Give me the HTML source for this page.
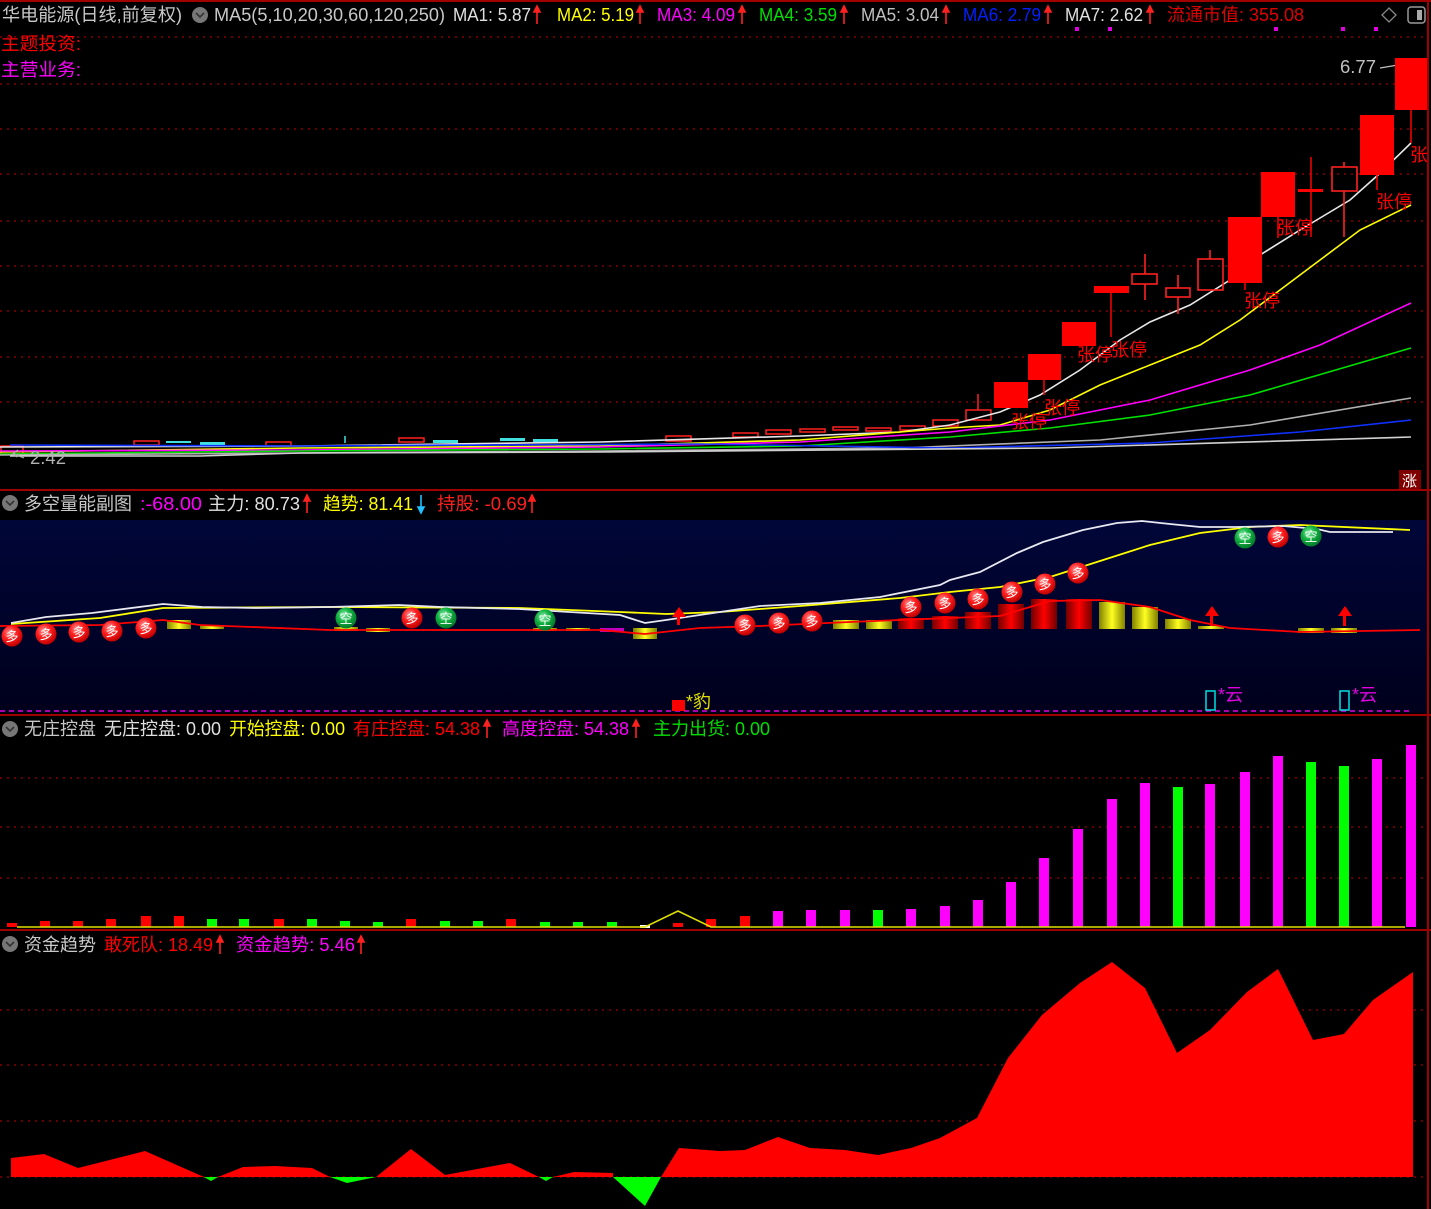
<!DOCTYPE html>
<html><head><meta charset="utf-8"><style>
html,body{margin:0;padding:0;background:#000;}
body{width:1431px;height:1209px;overflow:hidden;}
svg{display:block;}
text{font-family:"Liberation Sans","Noto Sans CJK SC","WenQuanYi Zen Hei",sans-serif;font-size:18px;}
</style></head><body>
<svg width="1431" height="1209" viewBox="0 0 1431 1209" xmlns="http://www.w3.org/2000/svg">
<defs>
<radialGradient id="rb" cx="40%" cy="35%" r="65%"><stop offset="0" stop-color="#ff9a9a"/><stop offset="0.5" stop-color="#ff2020"/><stop offset="1" stop-color="#c00000"/></radialGradient>
<radialGradient id="gb" cx="40%" cy="35%" r="65%"><stop offset="0" stop-color="#8ff0b0"/><stop offset="0.5" stop-color="#10b040"/><stop offset="1" stop-color="#067a2a"/></radialGradient>
<linearGradient id="yb" x1="0" x2="1"><stop offset="0" stop-color="#808000"/><stop offset="0.5" stop-color="#ffff20"/><stop offset="1" stop-color="#808000"/></linearGradient>
<linearGradient id="rbar" x1="0" x2="1"><stop offset="0" stop-color="#700000"/><stop offset="0.5" stop-color="#ff0000"/><stop offset="1" stop-color="#700000"/></linearGradient>
<linearGradient id="navy" x1="0" y1="0" x2="0" y2="1"><stop offset="0" stop-color="#000638"/><stop offset="1" stop-color="#00001c"/></linearGradient>
</defs>

<rect x="0" y="0" width="1431" height="2" fill="#a00000"/>
<rect x="1427" y="0" width="2" height="1209" fill="#a00000"/>
<rect x="0" y="489" width="1431" height="2" fill="#a00000"/>
<rect x="0" y="714" width="1431" height="2" fill="#a00000"/>
<rect x="0" y="929" width="1431" height="2" fill="#a00000"/>

<g stroke="#a00000" stroke-width="1.2" stroke-dasharray="2,5">
<line x1="0" y1="37" x2="1427" y2="37"/><line x1="0" y1="84" x2="1427" y2="84"/>
<line x1="0" y1="129" x2="1427" y2="129"/><line x1="0" y1="174" x2="1427" y2="174"/>
<line x1="0" y1="221" x2="1427" y2="221"/><line x1="0" y1="266" x2="1427" y2="266"/>
<line x1="0" y1="311" x2="1427" y2="311"/><line x1="0" y1="357" x2="1427" y2="357"/>
<line x1="0" y1="402" x2="1427" y2="402"/>
<line x1="0" y1="778" x2="1427" y2="778"/><line x1="0" y1="827" x2="1427" y2="827"/><line x1="0" y1="878" x2="1427" y2="878"/>
<line x1="0" y1="1010" x2="1427" y2="1010"/><line x1="0" y1="1065" x2="1427" y2="1065"/><line x1="0" y1="1121" x2="1427" y2="1121"/><line x1="0" y1="1177" x2="1427" y2="1177"/>
</g>

<!-- header row -->
<text x="2" y="21" fill="#c8c8c8" textLength="180" lengthAdjust="spacingAndGlyphs">华电能源(日线,前复权)</text>
<circle cx="200" cy="15" r="8" fill="#777"/><path d="M196 13 L200 17 L204 13" stroke="#333" stroke-width="1.6" fill="none"/>
<text x="214" y="21" fill="#c8c8c8" textLength="231" lengthAdjust="spacingAndGlyphs">MA5(5,10,20,30,60,120,250)</text>
<text x="453" y="21" fill="#e0e0e0" textLength="78" lengthAdjust="spacingAndGlyphs">MA1: 5.87</text>
<text x="557" y="21" fill="#ffff00" textLength="77" lengthAdjust="spacingAndGlyphs">MA2: 5.19</text>
<text x="657" y="21" fill="#ff00ff" textLength="78" lengthAdjust="spacingAndGlyphs">MA3: 4.09</text>
<text x="759" y="21" fill="#00e000" textLength="78" lengthAdjust="spacingAndGlyphs">MA4: 3.59</text>
<text x="861" y="21" fill="#c0c0c0" textLength="78" lengthAdjust="spacingAndGlyphs">MA5: 3.04</text>
<text x="963" y="21" fill="#0020ff" textLength="78" lengthAdjust="spacingAndGlyphs">MA6: 2.79</text>
<text x="1065" y="21" fill="#e0e0e0" textLength="78" lengthAdjust="spacingAndGlyphs">MA7: 2.62</text>
<g stroke="#ff2020" stroke-width="1.6" fill="#ff2020">
<path d="M537 24 V8 M534 12 L537 6 L540 12 Z"/><path d="M640 24 V8 M637 12 L640 6 L643 12 Z"/><path d="M742 24 V8 M739 12 L742 6 L745 12 Z"/><path d="M844 24 V8 M841 12 L844 6 L847 12 Z"/><path d="M946 24 V8 M943 12 L946 6 L949 12 Z"/><path d="M1048 24 V8 M1045 12 L1048 6 L1051 12 Z"/><path d="M1150 24 V8 M1147 12 L1150 6 L1153 12 Z"/>
</g>
<text x="1167" y="21" fill="#e00000" textLength="137" lengthAdjust="spacingAndGlyphs">流通市值: 355.08</text>
<path d="M1389 8 L1396 15 L1389 22 L1382 15 Z" stroke="#888" stroke-width="1.3" fill="none"/>
<rect x="1408" y="7" width="17" height="16" rx="3" stroke="#999" stroke-width="1.5" fill="none"/><rect x="1417" y="10" width="5" height="10" fill="#aaa"/>
<g fill="#e000e0"><rect x="1075" y="27" width="4" height="4"/><rect x="1108" y="27" width="4" height="4"/><rect x="1274" y="27" width="4" height="4"/><rect x="1341" y="27" width="4" height="4"/><rect x="1374" y="27" width="4" height="4"/></g>
<text x="1" y="50" fill="#ff0000" textLength="80" lengthAdjust="spacingAndGlyphs">主题投资:</text>
<text x="1" y="76" fill="#ff00ff" textLength="80" lengthAdjust="spacingAndGlyphs">主营业务:</text>
<text x="1340" y="73" fill="#c0c0c0" textLength="36" lengthAdjust="spacingAndGlyphs">6.77</text>
<path d="M1380 68 L1404 64 M1399 60 L1405 64 L1399 66" stroke="#c0c0c0" stroke-width="1.3" fill="none"/>

<!-- left flat candles -->
<g stroke="#ff2020" stroke-width="1.5" fill="none">
<rect x="1" y="446" width="22" height="8"/><rect x="134" y="441" width="25" height="4"/><rect x="266" y="442" width="25" height="4"/><rect x="399" y="438" width="25" height="4"/>
<rect x="666" y="436" width="25" height="5"/><rect x="733" y="433" width="25" height="4"/><rect x="766" y="430" width="25" height="4"/><rect x="800" y="429" width="25" height="3"/><rect x="833" y="427" width="25" height="3"/><rect x="866" y="428" width="25" height="3"/><rect x="900" y="426" width="25" height="4"/><rect x="933" y="420" width="25" height="6"/><rect x="966" y="410" width="25" height="10"/>
</g>
<g fill="#40e0e0"><rect x="166" y="441" width="25" height="2"/><rect x="200" y="442" width="25" height="3"/><rect x="433" y="440" width="25" height="3"/><rect x="500" y="438" width="25" height="3"/><rect x="533" y="439" width="25" height="3"/></g>
<line x1="345" y1="436" x2="345" y2="443" stroke="#40e0e0" stroke-width="1.5"/>
<line x1="978" y1="394" x2="978" y2="410" stroke="#ff2020" stroke-width="1.5"/>

<g fill="none" stroke-width="1.6">
<polyline stroke="#e8e8e8" points="0,447 300,446 600,442 800,436 900,432 950,425 1000,412 1040,395 1080,370 1120,340 1150,322 1190,305 1230,280 1260,255 1300,230 1350,200 1378,175 1411,143"/>
<polyline stroke="#ffff00" points="0,452 300,448 600,446 800,440 950,428 1000,425 1050,410 1100,385 1150,365 1200,345 1240,320 1280,290 1320,260 1360,230 1411,205"/>
<polyline stroke="#ff00ff" points="0,451 300,450 600,447 800,442 950,432 1050,420 1150,400 1250,370 1320,345 1411,303"/>
<polyline stroke="#00e000" points="0,454 300,451 600,449 800,446 950,437 1050,428 1150,415 1250,395 1411,348"/>
<polyline stroke="#b0b0b0" points="0,455 300,453 600,451 900,448 1100,440 1250,425 1411,398"/>
<polyline stroke="#1030ff" points="10,445 300,446 700,444 950,448 1150,443 1300,432 1411,420"/>
<polyline stroke="#d0d0d0" points="10,456 200,456 300,453 600,452 1050,448 1411,437"/>
</g>

<g fill="#ff0000" stroke="#ff0000" stroke-width="1.5">
<rect x="994" y="382" width="34" height="26" stroke="none"/>
<rect x="1028" y="354" width="33" height="26" stroke="none"/><line x1="1044" y1="380" x2="1044" y2="395"/>
<rect x="1062" y="322" width="34" height="24" stroke="none"/>
<rect x="1094" y="286" width="35" height="7" stroke="none"/><line x1="1111" y1="293" x2="1111" y2="337"/>
<rect x="1228" y="217" width="34" height="66" stroke="none"/><line x1="1245" y1="283" x2="1245" y2="290"/>
<rect x="1261" y="172" width="34" height="45" stroke="none"/><line x1="1278" y1="217" x2="1278" y2="238"/>
<rect x="1298" y="189" width="25" height="3" stroke="none"/><line x1="1311" y1="157" x2="1311" y2="237"/>
<rect x="1360" y="115" width="34" height="60" stroke="none"/><line x1="1377" y1="175" x2="1377" y2="190"/>
<rect x="1395" y="58" width="32" height="52" stroke="none"/><line x1="1411" y1="110" x2="1411" y2="143"/>
</g>
<g fill="none" stroke="#ff2020" stroke-width="1.6">
<rect x="1132" y="274" width="25" height="10"/><line x1="1145" y1="254" x2="1145" y2="274"/><line x1="1145" y1="284" x2="1145" y2="300"/>
<rect x="1166" y="288" width="24" height="9"/><line x1="1178" y1="275" x2="1178" y2="288"/><line x1="1178" y1="297" x2="1178" y2="314"/>
<rect x="1198" y="259" width="25" height="31"/><line x1="1210" y1="250" x2="1210" y2="259"/>
<rect x="1332" y="167" width="25" height="24"/><line x1="1344" y1="162" x2="1344" y2="167"/><line x1="1344" y1="191" x2="1344" y2="237"/>
</g>
<g fill="#ff0000">
<text x="1011" y="428">张停</text><text x="1044" y="414">张停</text><text x="1077" y="361">张停</text><text x="1111" y="356">张停</text>
<text x="1244" y="307">张停</text><text x="1277" y="234">张停</text><text x="1376" y="208">张停</text><text x="1410" y="161">张</text>
</g>
<text x="30" y="464" fill="#b0b0b0" textLength="36" lengthAdjust="spacingAndGlyphs">2.42</text>
<path d="M24 458 L14 454 M18 450 L13 454 L17 457" stroke="#b0b0b0" stroke-width="1.2" fill="none"/>
<rect x="1399" y="470" width="22" height="19" fill="#800000"/><text x="1402" y="486" fill="#fff" style="font-size:15px">涨</text>

<!-- panel 2 -->
<circle cx="10" cy="503" r="8" fill="#777"/><path d="M6 501 L10 505 L14 501" stroke="#333" stroke-width="1.6" fill="none"/>
<text x="24" y="510" fill="#c8c8c8" textLength="108" lengthAdjust="spacingAndGlyphs">多空量能副图</text>
<text x="140" y="510" fill="#ff00ff" textLength="62" lengthAdjust="spacingAndGlyphs">:-68.00</text>
<text x="208" y="510" fill="#e0e0e0" textLength="92" lengthAdjust="spacingAndGlyphs">主力: 80.73</text>
<text x="323" y="510" fill="#ffff00" textLength="90" lengthAdjust="spacingAndGlyphs">趋势: 81.41</text>
<text x="437" y="510" fill="#ff2020" textLength="90" lengthAdjust="spacingAndGlyphs">持股: -0.69</text>
<g stroke-width="1.6">
<path d="M307 513 V497 M304 501 L307 495 L310 501 Z" stroke="#ff2020" fill="#ff2020"/>
<path d="M421 495 V511 M418 507 L421 513 L424 507 Z" stroke="#20c0ff" fill="#20c0ff"/>
<path d="M532 513 V497 M529 501 L532 495 L535 501 Z" stroke="#ff2020" fill="#ff2020"/>
</g>
<rect x="0" y="520" width="1427" height="193" fill="url(#navy)"/>
<line x1="0" y1="711" x2="1412" y2="711" stroke="#e000e0" stroke-width="1.5" stroke-dasharray="5,4"/>
<g>
<rect x="167" y="620" width="24" height="9" fill="url(#yb)"/><rect x="200" y="625" width="24" height="4" fill="url(#yb)"/>
<rect x="334" y="627" width="24" height="4" fill="url(#yb)"/><rect x="366" y="628" width="24" height="4" fill="url(#yb)"/>
<rect x="533" y="628" width="24" height="3" fill="url(#yb)"/><rect x="566" y="628" width="24" height="3" fill="url(#yb)"/>
<rect x="600" y="628" width="24" height="4" fill="#c000c0"/>
<rect x="633" y="628" width="24" height="11" fill="url(#yb)"/>
<rect x="833" y="620" width="26" height="9" fill="url(#yb)"/><rect x="866" y="620" width="26" height="9" fill="url(#yb)"/>
<rect x="898" y="618" width="26" height="11" fill="url(#rbar)"/><rect x="932" y="616" width="26" height="13" fill="url(#rbar)"/>
<rect x="965" y="612" width="26" height="17" fill="url(#rbar)"/><rect x="998" y="604" width="26" height="25" fill="url(#rbar)"/>
<rect x="1031" y="599" width="26" height="30" fill="url(#rbar)"/><rect x="1066" y="599" width="26" height="30" fill="url(#rbar)"/>
<rect x="1099" y="602" width="26" height="27" fill="url(#yb)"/><rect x="1132" y="607" width="26" height="22" fill="url(#yb)"/>
<rect x="1165" y="619" width="26" height="10" fill="url(#yb)"/><rect x="1198" y="626" width="26" height="3" fill="url(#yb)"/>
<rect x="1298" y="628" width="26" height="5" fill="url(#yb)"/><rect x="1331" y="628" width="26" height="5" fill="url(#yb)"/>
</g>
<g fill="none" stroke-width="1.8">
<polyline stroke="#ff0000" points="0,626 100,625 163,620 200,625 330,630 500,630 600,630 645,634 700,628 760,626 850,622 950,618 1000,616 1050,601 1100,600 1150,607 1190,620 1230,628 1300,632 1420,630"/>
<polyline stroke="#ffff00" points="11,624 100,618 163,608 330,607 520,608 620,612 666,614 720,612 800,606 900,598 950,592 1000,587 1050,577 1100,561 1150,545 1200,533 1250,527 1300,525 1410,530"/>
<polyline stroke="#e8e8f0" points="11,623 46,617 92,613 163,604 202,607 257,608 330,607 399,605 441,607 519,609 620,615 645,623 666,620 720,612 760,606 820,603 880,597 940,585 950,580 980,572 1017,553 1043,542 1083,530 1117,523 1142,521 1170,524 1200,527 1237,527 1283,526 1317,529 1330,532 1393,532"/>
</g>
<g fill="#ff0000"><path d="M672 617 L679 607 L686 617 Z"/><rect x="677" y="616" width="3" height="9"/>
<path d="M1205 616 L1212 606 L1219 616 Z"/><rect x="1210" y="615" width="3" height="11"/>
<path d="M1338 616 L1345 606 L1352 616 Z"/><rect x="1343" y="615" width="3" height="11"/></g>
<g text-anchor="middle">
<g fill="url(#rb)"><circle cx="12" cy="636" r="10.5"/><circle cx="46" cy="634" r="10.5"/><circle cx="79" cy="632" r="10.5"/><circle cx="112" cy="631" r="10.5"/><circle cx="146" cy="628" r="10.5"/><circle cx="412" cy="618" r="10.5"/><circle cx="745" cy="625" r="10.5"/><circle cx="779" cy="623" r="10.5"/><circle cx="812" cy="621" r="10.5"/><circle cx="911" cy="607" r="10.5"/><circle cx="945" cy="603" r="10.5"/><circle cx="978" cy="599" r="10.5"/><circle cx="1012" cy="592" r="10.5"/><circle cx="1045" cy="584" r="10.5"/><circle cx="1078" cy="573" r="10.5"/><circle cx="1278" cy="537" r="10.5"/></g>
<g fill="url(#gb)"><circle cx="346" cy="618" r="10.5"/><circle cx="446" cy="618" r="10.5"/><circle cx="545" cy="620" r="10.5"/><circle cx="1245" cy="538" r="10.5"/><circle cx="1311" cy="536" r="10.5"/></g>
<g fill="#fff"><text x="12" y="641" style="font-size:13px">多</text><text x="46" y="639" style="font-size:13px">多</text><text x="79" y="637" style="font-size:13px">多</text><text x="112" y="636" style="font-size:13px">多</text><text x="146" y="633" style="font-size:13px">多</text><text x="412" y="623" style="font-size:13px">多</text><text x="745" y="630" style="font-size:13px">多</text><text x="779" y="628" style="font-size:13px">多</text><text x="812" y="626" style="font-size:13px">多</text><text x="911" y="612" style="font-size:13px">多</text><text x="945" y="608" style="font-size:13px">多</text><text x="978" y="604" style="font-size:13px">多</text><text x="1012" y="597" style="font-size:13px">多</text><text x="1045" y="589" style="font-size:13px">多</text><text x="1078" y="578" style="font-size:13px">多</text><text x="1278" y="542" style="font-size:13px">多</text>
<text x="346" y="623" style="font-size:13px">空</text><text x="446" y="623" style="font-size:13px">空</text><text x="545" y="625" style="font-size:13px">空</text><text x="1245" y="543" style="font-size:13px">空</text><text x="1311" y="541" style="font-size:13px">空</text></g>
</g>
<rect x="672" y="700" width="13" height="11" fill="#ff0000"/><text x="686" y="708" fill="#e0e000">*豹</text>
<rect x="1206" y="691" width="9" height="19" fill="none" stroke="#00e0e0" stroke-width="1.5"/><text x="1218" y="701" fill="#e000e0">*云</text>
<rect x="1340" y="691" width="9" height="19" fill="none" stroke="#00e0e0" stroke-width="1.5"/><text x="1352" y="701" fill="#e000e0">*云</text>

<!-- panel 3 -->
<circle cx="10" cy="729" r="8" fill="#777"/><path d="M6 727 L10 731 L14 727" stroke="#333" stroke-width="1.6" fill="none"/>
<text x="24" y="735" fill="#c8c8c8" textLength="72" lengthAdjust="spacingAndGlyphs">无庄控盘</text>
<text x="104" y="735" fill="#e0e0e0" textLength="117" lengthAdjust="spacingAndGlyphs">无庄控盘: 0.00</text>
<text x="229" y="735" fill="#ffff00" textLength="116" lengthAdjust="spacingAndGlyphs">开始控盘: 0.00</text>
<text x="353" y="735" fill="#ff0000" textLength="127" lengthAdjust="spacingAndGlyphs">有庄控盘: 54.38</text>
<text x="502" y="735" fill="#ff00ff" textLength="127" lengthAdjust="spacingAndGlyphs">高度控盘: 54.38</text>
<text x="653" y="735" fill="#00e000" textLength="117" lengthAdjust="spacingAndGlyphs">主力出货: 0.00</text>
<g stroke="#ff2020" fill="#ff2020" stroke-width="1.6">
<path d="M487 738 V722 M484 726 L487 720 L490 726 Z"/><path d="M636 738 V722 M633 726 L636 720 L639 726 Z"/>
</g>
<g>
<rect x="7" y="923" width="10" height="4" fill="#f00"/><rect x="40" y="921" width="10" height="6" fill="#f00"/><rect x="73" y="921" width="10" height="6" fill="#f00"/><rect x="106" y="919" width="10" height="8" fill="#f00"/><rect x="141" y="916" width="10" height="11" fill="#f00"/><rect x="174" y="916" width="10" height="11" fill="#f00"/>
<rect x="207" y="919" width="10" height="8" fill="#0f0"/><rect x="239" y="919" width="10" height="8" fill="#0f0"/><rect x="274" y="919" width="10" height="8" fill="#f00"/><rect x="307" y="919" width="10" height="8" fill="#0f0"/><rect x="340" y="921" width="10" height="6" fill="#0f0"/><rect x="373" y="922" width="10" height="5" fill="#0f0"/><rect x="406" y="919" width="10" height="8" fill="#f00"/><rect x="440" y="921" width="10" height="6" fill="#0f0"/><rect x="473" y="921" width="10" height="6" fill="#0f0"/><rect x="506" y="919" width="10" height="8" fill="#f00"/><rect x="540" y="922" width="10" height="5" fill="#0f0"/><rect x="573" y="922" width="10" height="5" fill="#0f0"/><rect x="607" y="922" width="10" height="5" fill="#0f0"/>
<rect x="640" y="925" width="10" height="3" fill="#fff"/><rect x="673" y="923" width="10" height="4" fill="#f00"/><rect x="706" y="919" width="10" height="8" fill="#f00"/><rect x="740" y="916" width="10" height="11" fill="#f00"/>
<rect x="773" y="911" width="10" height="16" fill="#f0f"/><rect x="806" y="910" width="10" height="17" fill="#f0f"/><rect x="840" y="910" width="10" height="17" fill="#f0f"/><rect x="873" y="910" width="10" height="17" fill="#0f0"/><rect x="906" y="909" width="10" height="18" fill="#f0f"/>
<rect x="940" y="906" width="10" height="21" fill="#f0f"/><rect x="973" y="900" width="10" height="27" fill="#f0f"/><rect x="1006" y="882" width="10" height="45" fill="#f0f"/><rect x="1039" y="858" width="10" height="69" fill="#f0f"/><rect x="1073" y="829" width="10" height="98" fill="#f0f"/><rect x="1107" y="799" width="10" height="128" fill="#f0f"/><rect x="1140" y="783" width="10" height="144" fill="#f0f"/><rect x="1173" y="787" width="10" height="140" fill="#0f0"/><rect x="1205" y="784" width="10" height="143" fill="#f0f"/><rect x="1240" y="772" width="10" height="155" fill="#f0f"/><rect x="1273" y="756" width="10" height="171" fill="#f0f"/><rect x="1306" y="762" width="10" height="165" fill="#0f0"/><rect x="1339" y="766" width="10" height="161" fill="#0f0"/><rect x="1372" y="759" width="10" height="168" fill="#f0f"/><rect x="1406" y="745" width="10" height="182" fill="#f0f"/>
</g>
<polyline fill="none" stroke="#e0e000" stroke-width="1.6" points="17,927 645,927 678,911 711,927 1405,927"/>

<!-- panel 4 -->
<circle cx="10" cy="944" r="8" fill="#777"/><path d="M6 942 L10 946 L14 942" stroke="#333" stroke-width="1.6" fill="none"/>
<text x="24" y="951" fill="#c8c8c8" textLength="72" lengthAdjust="spacingAndGlyphs">资金趋势</text>
<text x="104" y="951" fill="#ff0000" textLength="109" lengthAdjust="spacingAndGlyphs">敢死队: 18.49</text>
<text x="236" y="951" fill="#ff00ff" textLength="119" lengthAdjust="spacingAndGlyphs">资金趋势: 5.46</text>
<g stroke="#ff2020" fill="#ff2020" stroke-width="1.6">
<path d="M220 954 V938 M217 942 L220 936 L223 942 Z"/><path d="M361 954 V938 M358 942 L361 936 L364 942 Z"/>
</g>
<polygon fill="#00ff00" points="204,1177 211,1181 218,1177 330,1177 347,1183 376,1177 539,1177 546,1181 553,1177 613,1177 645,1206 661,1177"/>
<polygon fill="#ff0000" points="11,1177 11,1158 44,1154 78,1168 145,1151 204,1177 218,1177 243,1167 275,1166 312,1168 330,1177 376,1177 411,1149 445,1175 510,1163 539,1177 553,1177 574,1172 613,1173 613,1177 661,1177 679,1148 720,1151 745,1150 778,1137 810,1148 845,1150 878,1155 911,1148 940,1138 977,1118 1008,1058 1042,1015 1080,983 1112,962 1145,988 1177,1053 1210,1030 1247,992 1278,969 1313,1040 1344,1034 1373,1000 1413,972 1413,1177"/>
</svg>
</body></html>
